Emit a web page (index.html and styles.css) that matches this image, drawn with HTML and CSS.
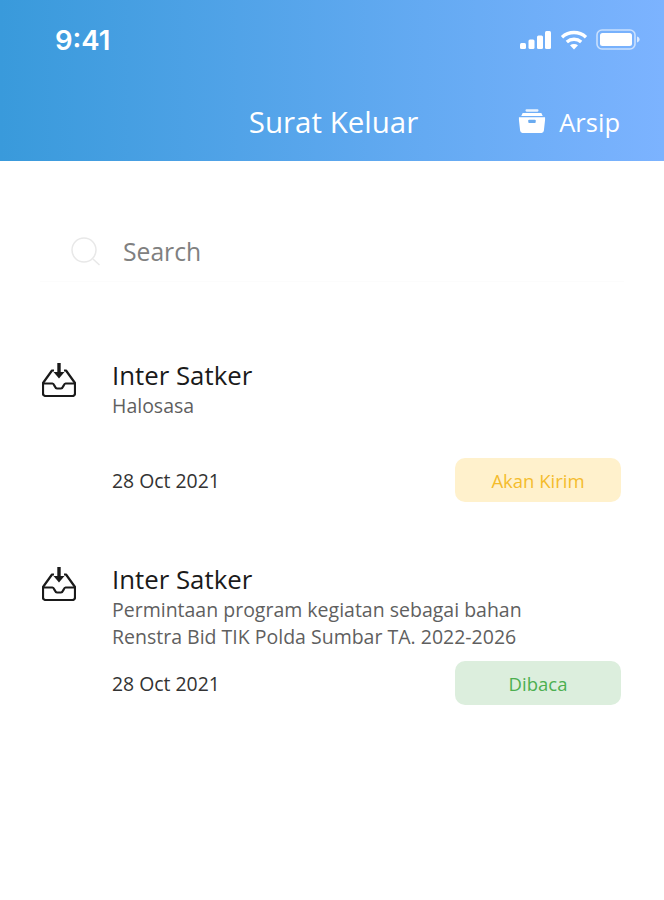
FILE: index.html
```html
<!DOCTYPE html>
<html lang="en">

<head>
  <meta charset="UTF-8">
  <meta name="viewport" content="width=device-width, initial-scale=1.0">
  <title>Surat Keluar</title>
  <link rel="stylesheet" href="styles.css">
</head>

<body>
  <header class="header">
    <div class="status-bar">
      <span class="time">9:41</span>
      <div class="status-icons">
        <svg width="31" height="18" viewBox="0 0 31 18" fill="#fff">
          <rect x="0" y="12" width="6" height="6" rx="1.5" />
          <rect x="8.5" y="8.5" width="6" height="9.5" rx="1.5" />
          <rect x="17" y="4.5" width="6" height="13.5" rx="1.5" />
          <rect x="25" y="0" width="6" height="18" rx="1.5" />
        </svg>
        <svg width="28" height="20" viewBox="0 0 28 20" fill="none" stroke="#fff" stroke-width="3.4">
          <path d="M2 7.2C9 1 19 1 26 7.2" />
          <path d="M6.8 12C11 8.4 17 8.4 21.2 12" />
          <path d="M14 19.5l-4-4.2c2.4-1.6 5.6-1.600 8 0z" fill="#fff" stroke="none" />
        </svg>
        <svg width="44" height="21" viewBox="0 0 44 21">
          <rect x="1" y="1" width="38" height="19" rx="5" fill="none" stroke="#fff" stroke-opacity="0.6" stroke-width="1.6" />
          <rect x="4" y="4" width="32" height="13" rx="2.5" fill="#fff" />
          <path d="M41 7.5c1.600.4 2.600 1.600 2.600 3s-1 2.600-2.600 3z" fill="#fff" fill-opacity="0.7" />
        </svg>
      </div>
    </div>
    <div class="title-bar">
      <h1>Surat Keluar</h1>
      <div class="archive">
        <svg width="28" height="25" viewBox="0 0 30 26" fill="#fff">
          <rect x="8" y="0" width="14" height="2.500" rx="1.200" fill-opacity="0.85" />
          <path d="M5 4h20l1.500 3h-23z" />
          <path d="M1 8.500h28v3l-1.300 11.500a2.500 2.500 0 0 1-2.500 2.200H4.800a2.500 2.500 0 0 1-2.500-2.200L1 11.500z" />
          <rect x="11" y="11" width="8" height="3.500" rx="1" fill="#6AABF0" />
        </svg>
        <span>Arsip</span>
      </div>
    </div>
  </header>

  <div class="search">
    <svg width="32" height="32" viewBox="0 0 32 32" fill="none" stroke="#e8e8e8" stroke-width="1.500">
      <circle cx="14" cy="14" r="12" />
      <path d="M23 23l6.500 6" />
    </svg>
    <span>Search</span>
  </div>

  <main class="list">
    <div class="item item-first">
      <svg class="item-icon" width="34" height="34" viewBox="0 0 34 34" fill="none" stroke="#1a1a1a" stroke-width="2.200" stroke-linejoin="round">
        <path d="M17 0v11" stroke-width="3.400" />
        <path d="M11.500 9l5.500 6.500 5.500-6.500z" fill="#1a1a1a" stroke="none" />
        <path d="M12 7.500H10L1 20v10.500a2.500 2.500 0 0 0 2.500 2.500h27a2.500 2.500 0 0 0 2.500-2.500V20L24 7.500H22" />
        <path d="M1 20.500h9.500c2 0 2 5 4.500 5h4c2.500 0 2.500-5 4.500-5H33" />
      </svg>
      <div class="item-body">
        <div class="item-title">Inter Satker</div>
        <div class="item-desc">Halosasa</div>
        <div class="item-foot item-foot-first">
          <span class="item-date">28 Oct 2021</span>
          <span class="badge badge-pending">Akan Kirim</span>
        </div>
      </div>
    </div>

    <div class="item">
      <svg class="item-icon" width="34" height="34" viewBox="0 0 34 34" fill="none" stroke="#1a1a1a" stroke-width="2.200" stroke-linejoin="round">
        <path d="M17 0v11" stroke-width="3.400" />
        <path d="M11.500 9l5.500 6.500 5.500-6.500z" fill="#1a1a1a" stroke="none" />
        <path d="M12 7.500H10L1 20v10.500a2.500 2.500 0 0 0 2.500 2.500h27a2.500 2.500 0 0 0 2.500-2.500V20L24 7.500H22" />
        <path d="M1 20.500h9.500c2 0 2 5 4.500 5h4c2.500 0 2.500-5 4.500-5H33" />
      </svg>
      <div class="item-body">
        <div class="item-title">Inter Satker</div>
        <div class="item-desc">Permintaan program kegiatan sebagai bahan<br>Renstra Bid TIK Polda Sumbar TA. 2022-2026</div>
        <div class="item-foot">
          <span class="item-date">28 Oct 2021</span>
          <span class="badge badge-read">Dibaca</span>
        </div>
      </div>
    </div>
  </main>
</body>

</html>
```

FILE: styles.css
```css
* {
  box-sizing: border-box;
}

body {
  margin: 0;
  font-family: "Open Sans", sans-serif;
  background-color: #fff;
  color: #1a1a1a;
}

.header {
  height: 161px;
  background: linear-gradient(90deg, #399ADB, #7CB3FF);
  color: #fff;
  padding: 0 24px 0 55px;
}

.status-bar {
  height: 79px;
  display: flex;
  justify-content: space-between;
  align-items: center;
}

.time {
  font-family: Inter, sans-serif;
  font-size: 27.500px;
  font-weight: 600;
}

.status-icons {
  display: flex;
  align-items: center;
  gap: 8.500px;
}

.title-bar {
  height: 82px;
  margin-right: 20px;
  padding-top: 3px;
  display: flex;
  justify-content: flex-end;
  align-items: center;
}

h1 {
  margin: 0 100px 0 0;
  font-size: 29.500px;
  font-weight: 500;
}

.archive {
  display: flex;
  align-items: center;
  gap: 13px;
  font-size: 25.500px;
}

.search {
  margin: 61px 40px 0;
  height: 60px;
  padding-left: 30px;
  display: flex;
  align-items: center;
  gap: 21px;
  font-size: 24.700px;
  color: #808080;
  border-bottom: 1px solid #fcfcfc;
}

.list {
  padding: 0 43px 0 42px;
}

.item {
  display: flex;
  gap: 36px;
  margin-top: 60px;
}

.item-first {
  margin-top: 76px;
}

.item-icon {
  flex: none;
  margin-top: 5px;
}

.item-body {
  flex: 1;
}

.item-title {
  font-size: 25.800px;
  font-weight: 500;
  line-height: 34px;
}

.item-desc {
  font-size: 19.500px;
  line-height: 27px;
  color: #5f5f5f;
}

.item-foot {
  display: flex;
  justify-content: space-between;
  align-items: center;
  margin-top: 11px;
}

.item-foot-first {
  margin-top: 39px;
}

.item-date {
  font-size: 19.400px;
  color: #333;
}

.badge {
  width: 166px;
  height: 44px;
  border-radius: 10px;
  display: flex;
  justify-content: center;
  align-items: center;
  font-size: 18.500px;
  font-weight: 500;
}

.badge-pending {
  background: #FFF1CC;
  color: #F4BC2C;
}

.badge-read {
  background: #DCEEDD;
  color: #4CAF50;
}
```
